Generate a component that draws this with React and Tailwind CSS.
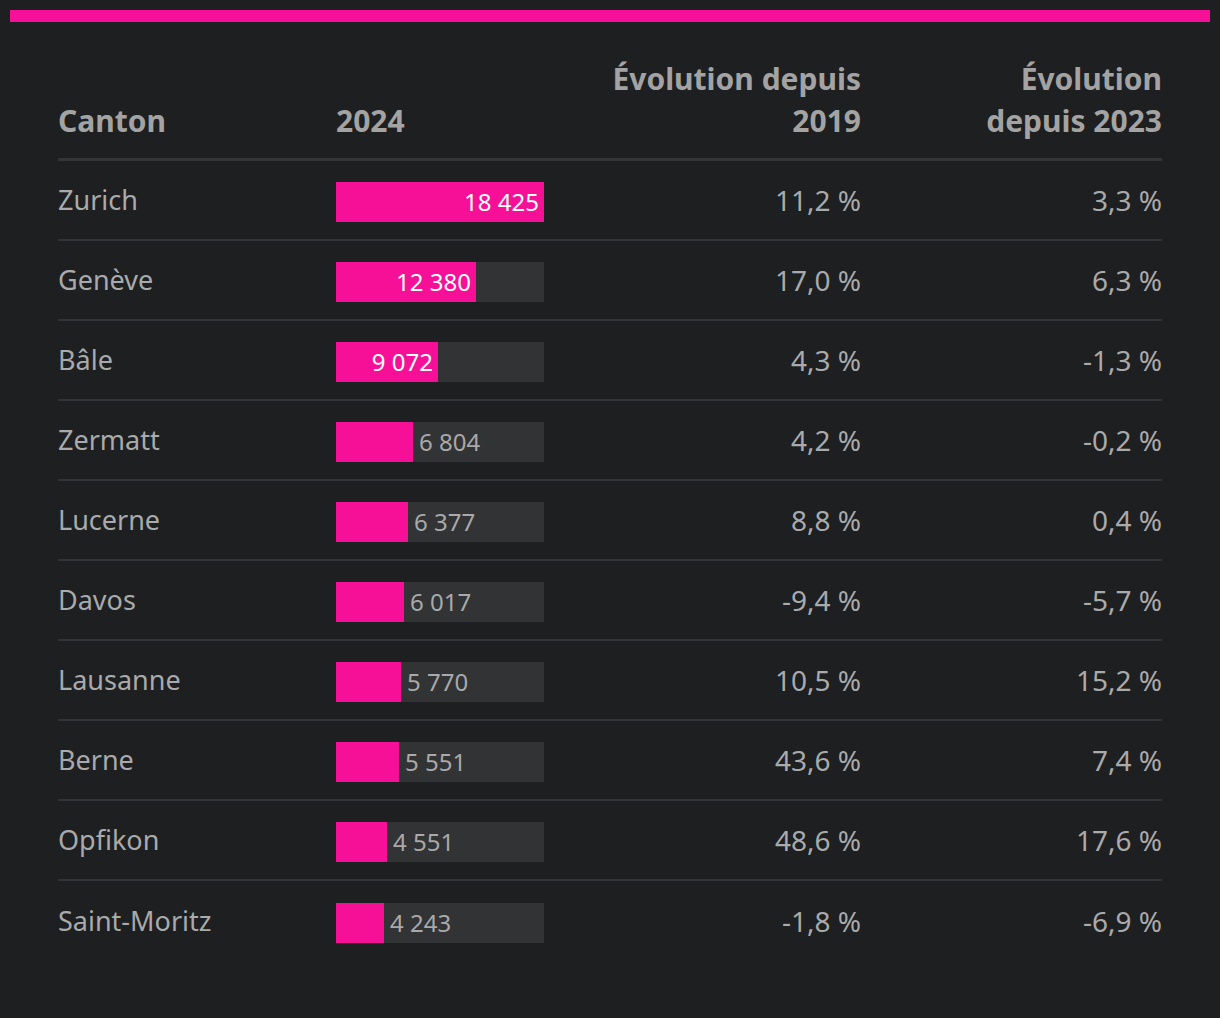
import React from "react";

const ROWS = [
  { name: "Zurich", value: 18425, label: "18 425", d19: "11,2 %", d23: "3,3 %" },
  { name: "Genève", value: 12380, label: "12 380", d19: "17,0 %", d23: "6,3 %" },
  { name: "Bâle", value: 9072, label: "9 072", d19: "4,3 %", d23: "-1,3 %" },
  { name: "Zermatt", value: 6804, label: "6 804", d19: "4,2 %", d23: "-0,2 %" },
  { name: "Lucerne", value: 6377, label: "6 377", d19: "8,8 %", d23: "0,4 %" },
  { name: "Davos", value: 6017, label: "6 017", d19: "-9,4 %", d23: "-5,7 %" },
  { name: "Lausanne", value: 5770, label: "5 770", d19: "10,5 %", d23: "15,2 %" },
  { name: "Berne", value: 5551, label: "5 551", d19: "43,6 %", d23: "7,4 %" },
  { name: "Opfikon", value: 4551, label: "4 551", d19: "48,6 %", d23: "17,6 %" },
  { name: "Saint-Moritz", value: 4243, label: "4 243", d19: "-1,8 %", d23: "-6,9 %" },
];

const MAX = 18425;
const TRACK = 208;

function Bar({ value, label }) {
  const w = Math.round((value / MAX) * TRACK);
  const inside = value > 8000;
  return (
    <div className="flex h-10 w-[208px] bg-[#323335]">
      <div
        className="flex h-full items-center justify-end bg-[#f60f97] pr-[5px] text-white"
        style={{ width: w }}
      >
        {inside && <span>{label}</span>}
      </div>
      {!inside && <span className="flex items-center pl-[6px] text-[#a9a9a9]">{label}</span>}
    </div>
  );
}

export default function App() {
  return (
    <div className="min-h-screen bg-[#1e1f21] p-[10px] text-[#a9aaab] font-['Noto_Sans',sans-serif]">
      <div className="h-[12px] bg-[#f60f97]" />

      <div className="mx-[48px] mt-[36px]">
        {/* header */}
        <div className="grid grid-cols-[278px_260px_265px_301px] items-end border-b-[3px] border-[#333537] pb-[16px] text-[30px] font-bold leading-[42px] text-[#a3a3a3]">
          <div>Canton</div>
          <div>2024</div>
          <div className="text-right">Évolution depuis<br />2019</div>
          <div className="text-right">Évolution<br />depuis 2023</div>
        </div>

        {ROWS.map((r, i) => (
          <div
            key={r.name}
            className={`grid h-[80px] grid-cols-[278px_260px_265px_301px] items-center ${
              i < ROWS.length - 1 ? "border-b-2 border-[#333437]" : ""
            }`}
          >
            <div className="text-[27px]">{r.name}</div>
            <div className="pt-[3px] text-[24px]">
              <Bar value={r.value} label={r.label} />
            </div>
            <div className="text-right text-[28px]">{r.d19}</div>
            <div className="text-right text-[28px]">{r.d23}</div>
          </div>
        ))}
      </div>
    </div>
  );
}
